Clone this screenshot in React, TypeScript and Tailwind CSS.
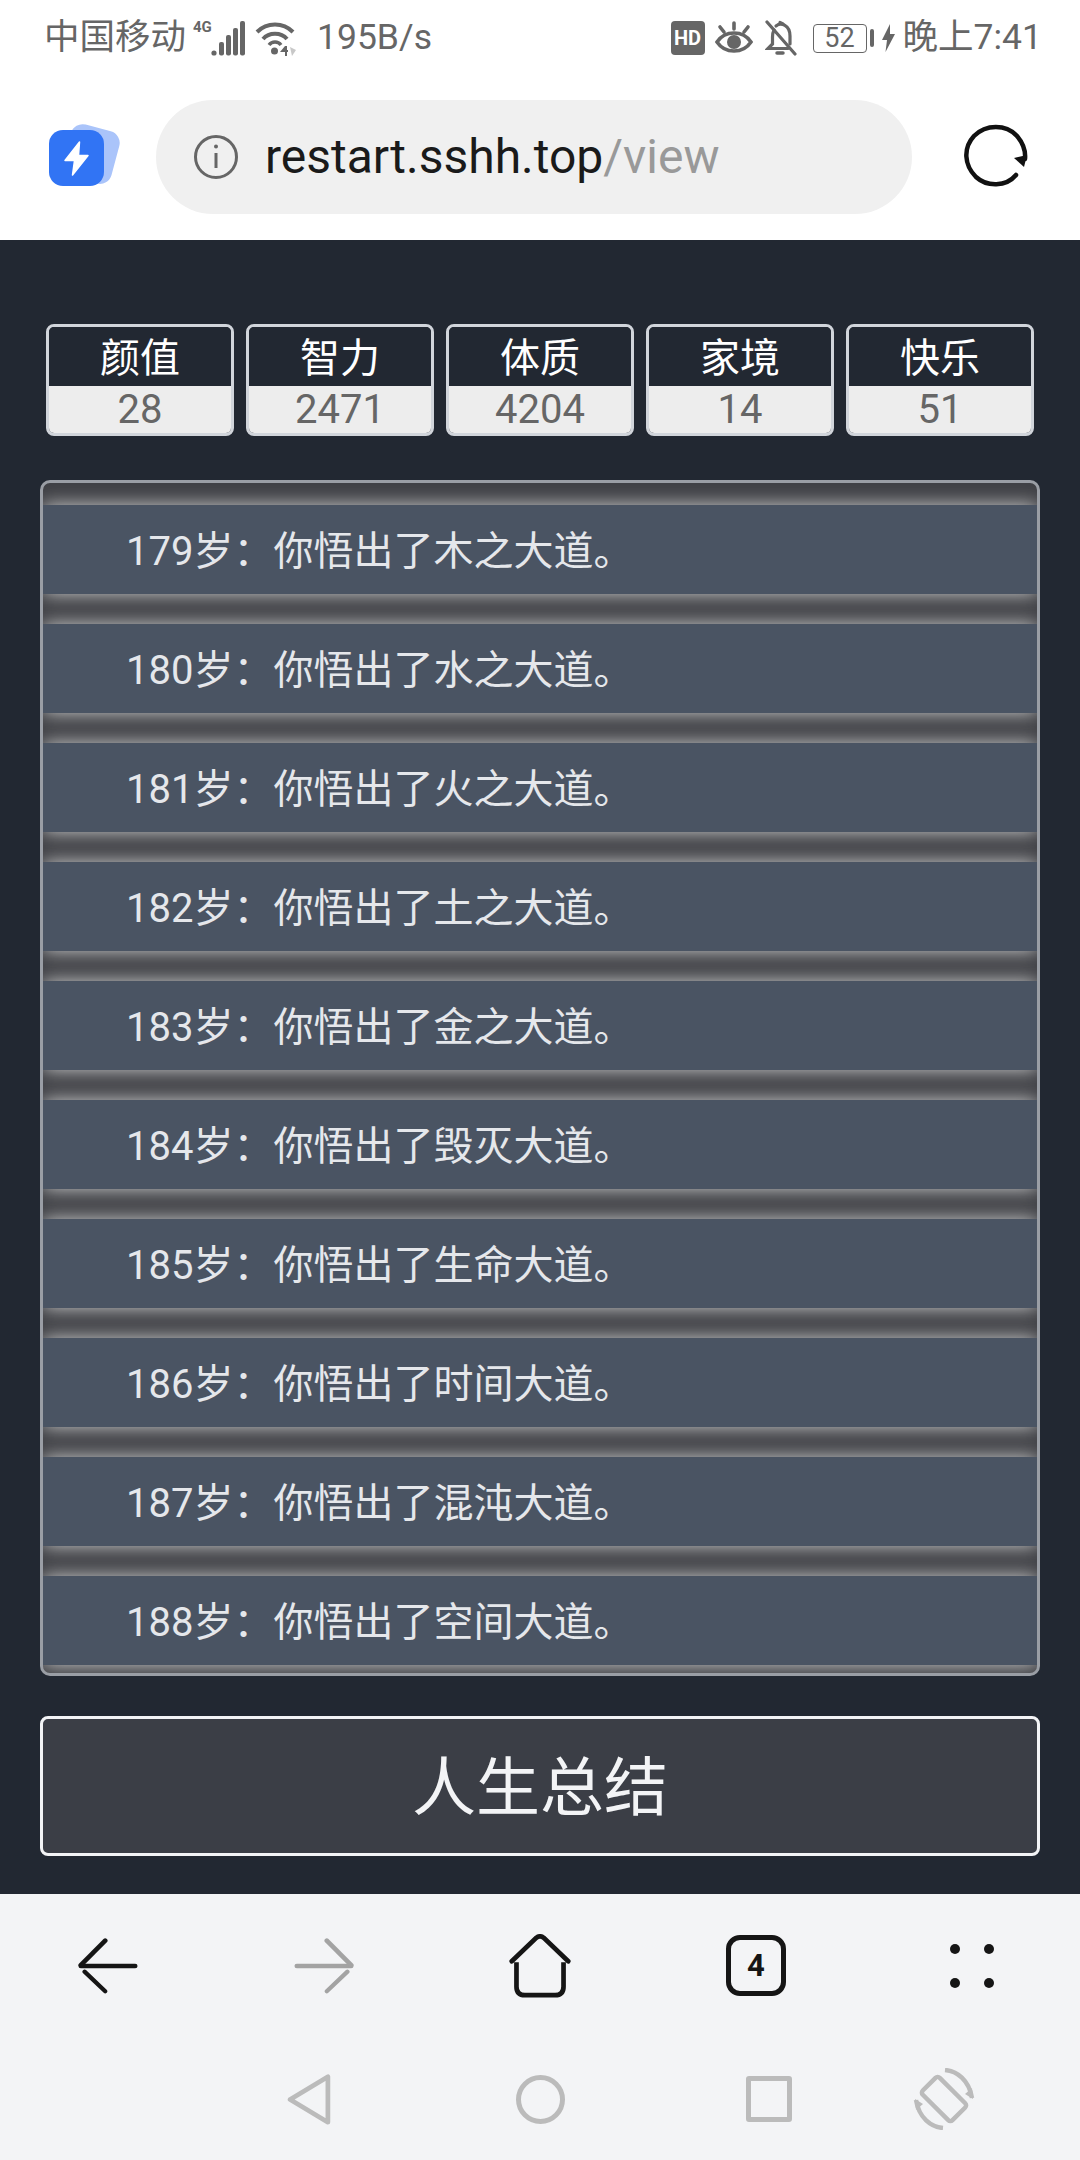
const FONT = "font-['Roboto','Noto_Sans_CJK_SC',sans-serif]";

const stats = [
  { label: "颜值", value: 28 },
  { label: "智力", value: 2471 },
  { label: "体质", value: 4204 },
  { label: "家境", value: 14 },
  { label: "快乐", value: 51 },
];

const events = [
  "179岁：你悟出了木之大道。",
  "180岁：你悟出了水之大道。",
  "181岁：你悟出了火之大道。",
  "182岁：你悟出了土之大道。",
  "183岁：你悟出了金之大道。",
  "184岁：你悟出了毁灭大道。",
  "185岁：你悟出了生命大道。",
  "186岁：你悟出了时间大道。",
  "187岁：你悟出了混沌大道。",
  "188岁：你悟出了空间大道。",
];

function SignalIcon() {
  return (
    <div className="relative h-[36px] w-[52px]">
      <span className="absolute left-0 top-0 text-[15px] font-bold leading-[15px] text-[#666]">4G</span>
      <svg width="52" height="36" viewBox="0 0 52 36" className="text-[#666]">
        <g fill="currentColor">
          <circle cx="21" cy="33" r="2.6" />
          <rect x="26" y="22" width="5" height="13.5" rx="2" />
          <rect x="33" y="15" width="5" height="20.5" rx="2" />
          <rect x="40" y="8" width="5" height="27.5" rx="2" />
          <rect x="47" y="1" width="5" height="34.5" rx="2" />
        </g>
      </svg>
    </div>
  );
}

function WifiIcon() {
  return (
    <svg width="42" height="36" viewBox="0 0 42 36" fill="none" stroke="#666" strokeWidth="4">
      <path d="M2 12C12 2 28 2 38 12" />
      <path d="M8 19C14 12 26 12 32 19" />
      <path d="M14 25C17 21 23 21 26 25" strokeWidth="3.5" />
      <circle cx="19.5" cy="31" r="3.5" fill="#666" stroke="none" />
      <path d="M30 26l-5 6h5v4h2v-4h1v-2h-1v-4z" fill="#666" stroke="none" />
      <path d="M35 27l6 3-4 6z" fill="#c8c8c8" stroke="none" />
    </svg>
  );
}

function EyeIcon() {
  return (
    <svg width="38" height="34" viewBox="0 0 38 34" fill="none" stroke="#666" strokeWidth="3.6" strokeLinecap="round">
      <path d="M2 21C10 9 28 9 36 21C28 33 10 33 2 21Z" />
      <circle cx="19" cy="21" r="7" fill="#666" stroke="none" />
      <path d="M19 2v6M5 6l4 5M33 6l-4 5" />
    </svg>
  );
}

function BellOffIcon() {
  return (
    <svg width="32" height="36" viewBox="0 0 32 36" fill="none" stroke="#666" strokeWidth="3.2" strokeLinecap="round">
      <path d="M9 10c-1 2-1.500 4-1.500 7v7L3 28.500h20" />
      <path d="M11 6c5-4 14-1 14 10v8" />
      <path d="M15 2.500l3 1.500" />
      <path d="M2 2l28 32" />
      <path d="M12 33h6" strokeWidth="3.500" />
    </svg>
  );
}

function BatteryIcon() {
  return (
    <div className="flex items-center">
      <div className="flex h-[29px] w-[54px] items-center justify-center rounded-[4px] border border-[#666] text-[27px] leading-none text-[#666]">
        52
      </div>
      <div className="ml-[3px] h-[18px] w-[4px] rounded-[2px] bg-[#666]" />
      <svg width="14" height="28" viewBox="0 0 14 28" className="ml-[8px]" fill="#666">
        <path d="M8 0L0 16h5l-1.500 12L13 10H8z" />
      </svg>
    </div>
  );
}

function StatusBar() {
  return (
    <div className="flex h-[76px] items-center justify-between pl-[44px] pr-[38px]">
      <div className="flex items-center">
        <span className="text-[35.5px] leading-none text-[#666]">中国移动</span>
        <span className="ml-[7px] flex"><SignalIcon /></span>
        <span className="ml-[10px] flex"><WifiIcon /></span>
        <span className="ml-[20px] text-[35.5px] leading-none text-[#666]">195B/s</span>
      </div>
      <div className="flex items-center">
        <span className="flex h-[34px] w-[34px] items-center justify-center rounded-[4px] bg-[#666] text-[20px] font-bold leading-none text-white">
          HD
        </span>
        <span className="ml-[10px] flex"><EyeIcon /></span>
        <span className="ml-[12px] flex"><BellOffIcon /></span>
        <span className="ml-[16px] flex"><BatteryIcon /></span>
        <span className="ml-[7px] text-[35.5px] leading-none text-[#666]">晚上7:41</span>
      </div>
    </div>
  );
}

function AppLogo() {
  return (
    <svg width="72" height="76" viewBox="0 0 72 76">
      <rect x="17" y="8" width="50" height="54" rx="12" fill="#aac4fa" transform="rotate(15 42 36)" />
      <rect x="0" y="11" width="55" height="56" rx="14" fill="#3174f4" />
      <path d="M30.500 23L16 41.500h9.500L23.500 56 39 36.500h-9.500z" fill="#fff" stroke="#fff" strokeWidth="1.500" strokeLinejoin="round" />
    </svg>
  );
}

function InfoIcon() {
  return (
    <svg width="46" height="46" viewBox="0 0 46 46" fill="none" stroke="#666" strokeWidth="3">
      <circle cx="23" cy="23" r="20.500" />
      <path d="M23 19v15" />
      <circle cx="23" cy="12.500" r="2" fill="#666" stroke="none" />
    </svg>
  );
}

function RefreshIcon() {
  return (
    <svg width="72" height="72" viewBox="0 0 72 72" fill="none" stroke="#111" strokeWidth="4.500" strokeLinecap="round">
      <path d="M56 54C46 66 27 66 16 56C4 44 3 27 14 15C26 3 46 3 57 15C62 21 66 28 65 38" />
      <path d="M55 34l10 9 3-12z" fill="#111" stroke="none" transform="translate(-1 3)" />
    </svg>
  );
}

function AddressBar() {
  return (
    <div className="flex h-[164px] items-center pb-[3px]">
      <div className="ml-[49px] flex w-[72px]">
        <AppLogo />
      </div>
      <div className="ml-[35px] flex h-[114px] w-[756px] items-center rounded-full bg-[#f0f0f0] pl-[37px]">
        <InfoIcon />
        <span className="ml-[26px] text-[48px] leading-none text-[#1a1a1a]">
          restart.sshh.top<span className="text-[#999]">/view</span>
        </span>
      </div>
      <div className="ml-[48px] flex">
        <RefreshIcon />
      </div>
    </div>
  );
}

function StatCards() {
  return (
    <div className="mx-[46px] flex gap-[12px]">
      {stats.map((s) => (
        <div key={s.label} className="w-[188px] overflow-hidden rounded-[8px] border-[3px] border-[#d1d5db] text-center">
          <div className="h-[59px] bg-[#222832] pt-[4px] text-[40px] leading-[55px] text-white">{s.label}</div>
          <div className="h-[47px] bg-[#ededed] text-[40px] leading-[47px] text-[#666]">{s.value}</div>
        </div>
      ))}
    </div>
  );
}

function EventLog() {
  return (
    <div className="mx-[40px] mt-[44px] flex h-[1196px] flex-col gap-[30px] overflow-hidden rounded-[10px] border-[3px] border-[#9a9ea5] bg-[#3f4045] pt-[22px]">
      {events.map((text) => (
        <div
          key={text}
          className="h-[89px] shrink-0 bg-[#4a5463] pl-[83px] pt-[4px] text-[40px] leading-[85px] text-[#e5e7eb] shadow-[0_0_18px_rgba(255,255,255,0.75)]"
        >
          {text}
        </div>
      ))}
    </div>
  );
}

function ToolbarArrow({ color, flip }: { color: string; flip?: boolean }) {
  return (
    <svg width="60" height="56" viewBox="0 0 64 58" fill="none" stroke={color} strokeWidth="5" strokeLinecap="round" className={flip ? "-scale-x-100" : ""}>
      <path d="M3 29H61" />
      <path d="M3 28L29 2" />
      <path d="M7 35L29 56" strokeWidth="4.500" />
    </svg>
  );
}

function BrowserToolbar() {
  return (
    <div className="grid h-[150px] grid-cols-5 place-items-center pb-[7px]">
      <ToolbarArrow color="#151515" />
      <ToolbarArrow color="#a3a3a3" flip />
      <svg width="66" height="64" viewBox="0 0 66 68" fill="none" stroke="#151515" strokeWidth="5" strokeLinecap="round">
        <path d="M3 29L29 4Q33 1 37 4L63 29" />
        <path d="M8 30V56Q8 65 17 65H49Q58 65 58 56V30" strokeLinecap="butt" />
      </svg>
      <div className="flex h-[61px] w-[60px] items-center justify-center rounded-[14px] border-[5px] border-[#151515] text-[31px] font-bold leading-none text-[#151515]">
        4
      </div>
      <div className="grid grid-cols-2 gap-x-[24px] gap-y-[24px]">
        <span className="h-[10px] w-[10px] rounded-full bg-[#151515]" />
        <span className="h-[10px] w-[10px] rounded-full bg-[#151515]" />
        <span className="h-[10px] w-[10px] rounded-full bg-[#151515]" />
        <span className="h-[10px] w-[10px] rounded-full bg-[#151515]" />
      </div>
    </div>
  );
}

function SystemNav() {
  return (
    <div className="flex h-[116px] items-center pl-[287px] pb-[6px]">
      <svg width="44" height="51" viewBox="0 0 46 54" fill="none" stroke="#bbb" strokeWidth="5" strokeLinejoin="round">
        <path d="M3 27L43 3V51Z" />
      </svg>
      <span className="ml-[185px] h-[49px] w-[49px] rounded-full border-[5px] border-[#bbb]" />
      <span className="ml-[181px] h-[46px] w-[46px] rounded-[3px] border-[5px] border-[#bbb]" />
      <svg width="62" height="62" viewBox="0 0 62 62" fill="none" stroke="#bbb" strokeWidth="4.500" className="ml-[121px]">
        <rect x="19" y="10" width="24" height="42" rx="3" transform="rotate(-45 31 31)" />
        <path d="M32 2C44 3 56 12 59 30" />
        <path d="M30 60C18 59 6 50 3 32" />
        <path d="M52 26l8 5-1-11z" fill="#bbb" stroke="none" />
        <path d="M10 36l-8-5 1 11z" fill="#bbb" stroke="none" />
      </svg>
    </div>
  );
}

export default function App() {
  return (
    <div className={`flex h-[2160px] w-[1080px] flex-col overflow-hidden bg-white ${FONT}`}>
      <StatusBar />
      <AddressBar />
      <main className="h-[1654px] bg-[#222832] pt-[84px]">
        <StatCards />
        <EventLog />
        <button className="mx-[40px] mt-[40px] flex h-[140px] w-[1000px] items-center justify-center rounded-[8px] border-[3px] border-[#f3f4f6] bg-[#3b3e46] pt-[5px] text-[64px] text-[#f3f4f6]">
          人生总结
        </button>
      </main>
      <footer className="h-[266px] bg-[#f3f4f6]">
        <BrowserToolbar />
        <SystemNav />
      </footer>
    </div>
  );
}
